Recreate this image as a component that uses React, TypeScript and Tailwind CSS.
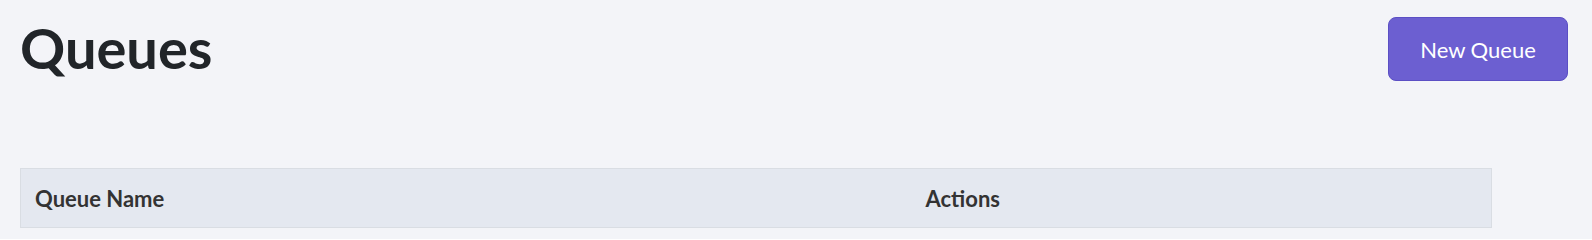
export default function App() {
  return (
    <div
      className="min-h-[239px] w-full bg-[#f3f4f8] pl-5 pr-6 pt-[17px]"
      style={{ fontFamily: "Lato, 'Open Sans', sans-serif" }}
    >
      <div className="flex items-start justify-between">
        <h1 className="mt-[-1px] text-[56px] font-bold leading-[64px] text-[#212529]">Queues</h1>
        <button className="h-16 w-[180px] rounded-lg border border-[#5b4fc4] bg-[#6c5fd1] text-[22px] text-white">
          New Queue
        </button>
      </div>
      <table className="mt-[87px] w-[1472px] border-collapse border border-[#d9dde3]">
        <thead>
          <tr className="h-[59px] bg-[#e4e8f0] text-left text-[22px] font-bold text-[#333]">
            <th className="w-[890px] px-[14px]">Queue Name</th>
            <th className="px-[15px]">Actions</th>
          </tr>
        </thead>
      </table>
    </div>
  )
}
